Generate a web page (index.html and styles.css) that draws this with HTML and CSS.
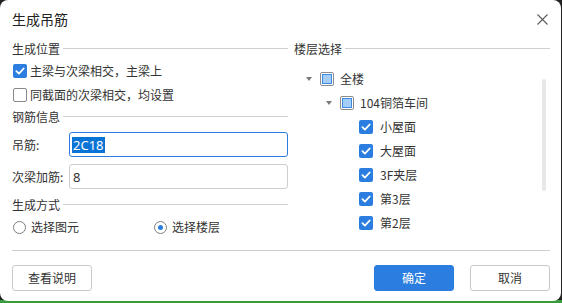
FILE: index.html
```html
<!DOCTYPE html>
<html lang="zh-CN">
<head>
<meta charset="utf-8">
<title>生成吊筋</title>
<link rel="stylesheet" href="styles.css">
</head>
<body>
<div class="dialog">
  <div class="titlebar">
    <span class="title">生成吊筋</span>
    <svg class="close" width="11" height="11" viewBox="0 0 11 11"><path d="M0.5 0.5 L10.5 10.5 M10.5 0.5 L0.5 10.5" stroke="#5a5a5a" stroke-width="1.1" fill="none"/></svg>
  </div>
  <div class="body">
    <div class="col left">
      <div class="section s1"><span>生成位置</span><i class="rule"></i></div>
      <div class="check-row">
        <span class="cb checked"><svg width="14" height="14" viewBox="0 0 14 14"><path d="M3.4 7.2 L5.9 9.6 L10.7 4.5" stroke="#fff" stroke-width="1.8" fill="none" stroke-linecap="round" stroke-linejoin="round"/></svg></span>
        <span>主梁与次梁相交，主梁上</span>
      </div>
      <div class="check-row">
        <span class="cb"></span>
        <span>同截面的次梁相交，均设置</span>
      </div>
      <div class="section s2"><span>钢筋信息</span><i class="rule"></i></div>
      <div class="field f1">
        <span class="field-label">吊筋:</span>
        <div class="input focused"><span class="sel">2C18</span></div>
      </div>
      <div class="field f2">
        <span class="field-label">次梁加筋:</span>
        <div class="input"><span class="val">8</span></div>
      </div>
      <div class="section s3"><span>生成方式</span><i class="rule"></i></div>
      <div class="radio-row">
        <div class="radio first"><span class="rb"></span><span>选择图元</span></div>
        <div class="radio"><span class="rb on"></span><span>选择楼层</span></div>
      </div>
    </div>
    <div class="col right">
      <div class="section s1"><span>楼层选择</span><i class="rule"></i></div>
      <div class="tree-wrap">
        <ul class="tree">
          <li class="node lv0"><span class="arrow"><i class="tri"></i></span><span class="cb partial"><i class="inner"></i></span><span class="label">全楼</span></li>
          <li class="node lv1"><span class="arrow"><i class="tri"></i></span><span class="cb partial"><i class="inner"></i></span><span class="label">104铜箔车间</span></li>
          <li class="node lv2"><span class="arrow"></span><span class="cb checked"><svg width="14" height="14" viewBox="0 0 14 14"><path d="M3.4 7.2 L5.9 9.6 L10.7 4.5" stroke="#fff" stroke-width="1.8" fill="none" stroke-linecap="round" stroke-linejoin="round"/></svg></span><span class="label">小屋面</span></li>
          <li class="node lv2"><span class="arrow"></span><span class="cb checked"><svg width="14" height="14" viewBox="0 0 14 14"><path d="M3.4 7.2 L5.9 9.6 L10.7 4.5" stroke="#fff" stroke-width="1.8" fill="none" stroke-linecap="round" stroke-linejoin="round"/></svg></span><span class="label">大屋面</span></li>
          <li class="node lv2"><span class="arrow"></span><span class="cb checked"><svg width="14" height="14" viewBox="0 0 14 14"><path d="M3.4 7.2 L5.9 9.6 L10.7 4.5" stroke="#fff" stroke-width="1.8" fill="none" stroke-linecap="round" stroke-linejoin="round"/></svg></span><span class="label">3F夹层</span></li>
          <li class="node lv2"><span class="arrow"></span><span class="cb checked"><svg width="14" height="14" viewBox="0 0 14 14"><path d="M3.4 7.2 L5.9 9.6 L10.7 4.5" stroke="#fff" stroke-width="1.8" fill="none" stroke-linecap="round" stroke-linejoin="round"/></svg></span><span class="label">第3层</span></li>
          <li class="node lv2"><span class="arrow"></span><span class="cb checked"><svg width="14" height="14" viewBox="0 0 14 14"><path d="M3.4 7.2 L5.9 9.6 L10.7 4.5" stroke="#fff" stroke-width="1.8" fill="none" stroke-linecap="round" stroke-linejoin="round"/></svg></span><span class="label">第2层</span></li>
        </ul>
        <div class="scrollbar"></div>
      </div>
    </div>
  </div>
  <div class="footer">
    <button class="btn">查看说明</button>
    <button class="btn primary">确定</button>
    <button class="btn">取消</button>
  </div>
</div>
</body>
</html>
```

FILE: styles.css
```css
html, body {
  margin: 0;
  padding: 0;
}
body {
  width: 562px;
  height: 303px;
  overflow: hidden;
  background: linear-gradient(to bottom, #222 0, #222 300px, #3a9b3c 300px);
  font-family: "Noto Sans CJK SC", "Noto Sans", sans-serif;
  color: #333;
  font-size: 12px;
}
.dialog {
  width: 561px;
  height: 301px;
  box-sizing: border-box;
  background: #fff;
  border-radius: 8px;
  padding: 0 11px 0 12px;
  display: flex;
  flex-direction: column;
}
.titlebar {
  height: 38px;
  display: flex;
  align-items: center;
  justify-content: space-between;
}
.title {
  font-size: 14px;
  color: #222;
  line-height: 18px;
}
.close {
  margin-right: 2px;
  margin-top: 1px;
}
.body {
  height: 212px;
  display: flex;
  gap: 6px;
}
.col.left {
  width: 276px;
  display: flex;
  flex-direction: column;
}
.col.right {
  flex: 1;
  display: flex;
  flex-direction: column;
}
.section {
  height: 18px;
  line-height: 18px;
  display: flex;
  align-items: center;
  color: #333;
}
.section .rule {
  flex: 1;
  height: 1px;
  background: #cfcfcf;
  margin-left: 3px;
  margin-top: -1px;
}
.section.s1 { margin-top: 2px; margin-bottom: 1px; }
.section.s2 { margin-top: 1px; }
.section.s3 { margin-top: 7px; margin-bottom: 1px; }

.check-row {
  height: 24px;
  display: flex;
  align-items: center;
  line-height: 16px;
}
.cb {
  width: 14px;
  height: 14px;
  box-sizing: border-box;
  border-radius: 2px;
  border: 1px solid #8a8a8a;
  background: #fff;
  display: flex;
  align-items: center;
  justify-content: center;
  flex: none;
}
.check-row .cb {
  margin-left: 1px;
  margin-right: 3px;
}
.cb.checked {
  border: none;
  background: #2b7de0;
}
.cb.partial {
  border-color: #8c8c8c;
}
.cb.partial .inner {
  width: 10px;
  height: 10px;
  box-sizing: border-box;
  background: #a4cdf8;
  border: 1px solid #3c8ce4;
}

.field {
  height: 25px;
  display: flex;
  align-items: center;
}
.field.f1 { margin-top: 6px; }
.field.f2 { margin-top: 7px; }
.field-label {
  width: 57px;
  flex: none;
  line-height: 16px;
}
.input {
  flex: 1;
  height: 25px;
  box-sizing: border-box;
  border: 1px solid #cdcdcd;
  border-radius: 3px;
  display: flex;
  align-items: center;
  padding-left: 2px;
  font-size: 13px;
  font-family: "Noto Sans", "Noto Sans CJK SC", sans-serif;
}
.input.focused {
  border-color: #2b7de0;
}
.sel {
  background: #0a74d6;
  color: #fff;
  line-height: 16px;
  height: 16px;
  padding: 0 1px;
}
.val {
  padding-left: 1px;
  line-height: 16px;
}

.radio-row {
  height: 24px;
  display: flex;
  align-items: center;
}
.radio {
  display: flex;
  align-items: center;
  line-height: 16px;
}
.radio.first {
  width: 141px;
}
.rb {
  width: 13px;
  height: 13px;
  box-sizing: border-box;
  border: 1px solid #7d7d7d;
  border-radius: 50%;
  margin-left: 1px;
  margin-right: 5px;
  display: flex;
  align-items: center;
  justify-content: center;
  background: #fff;
}
.rb.on::after {
  content: "";
  width: 5px;
  height: 5px;
  border-radius: 50%;
  background: #2b7de0;
}

.tree-wrap {
  flex: 1;
  display: flex;
  margin-top: 8px;
}
.tree {
  list-style: none;
  margin: 0;
  padding: 0;
  flex: 1;
}
.node {
  height: 24px;
  display: flex;
  align-items: center;
  line-height: 16px;
}
.node.lv0 { padding-left: 12px; }
.node.lv1 { padding-left: 32px; }
.node.lv2 { padding-left: 52px; }
.arrow {
  width: 14px;
  flex: none;
  display: flex;
  align-items: center;
}
.tri {
  width: 0;
  height: 0;
  border-left: 3.5px solid transparent;
  border-right: 3.5px solid transparent;
  border-top: 4px solid #7a7a7a;
  margin-top: -1px;
}
.node .label {
  margin-left: 6px;
}
.node.lv2 .label {
  margin-left: 7px;
}
.node.lv2 .cb {
  margin-left: -1px;
}
.scrollbar {
  width: 4px;
  height: 112px;
  margin-top: 12px;
  margin-right: 4px;
  border-radius: 2px;
  background: #e8e8e8;
}

.footer {
  border-top: 1px solid #cfcfcf;
  padding-top: 14px;
  display: flex;
  gap: 16px;
}
.btn {
  width: 80px;
  height: 26px;
  box-sizing: border-box;
  border: 1px solid #c8c8c8;
  border-radius: 3px;
  background: #fff;
  font-family: "Noto Sans CJK SC", sans-serif;
  font-size: 12px;
  color: #333;
  padding: 0;
  line-height: 16px;
}
.btn.primary {
  margin-left: auto;
  background: #2b7de0;
  border-color: #2b7de0;
  color: #fff;
}
```
